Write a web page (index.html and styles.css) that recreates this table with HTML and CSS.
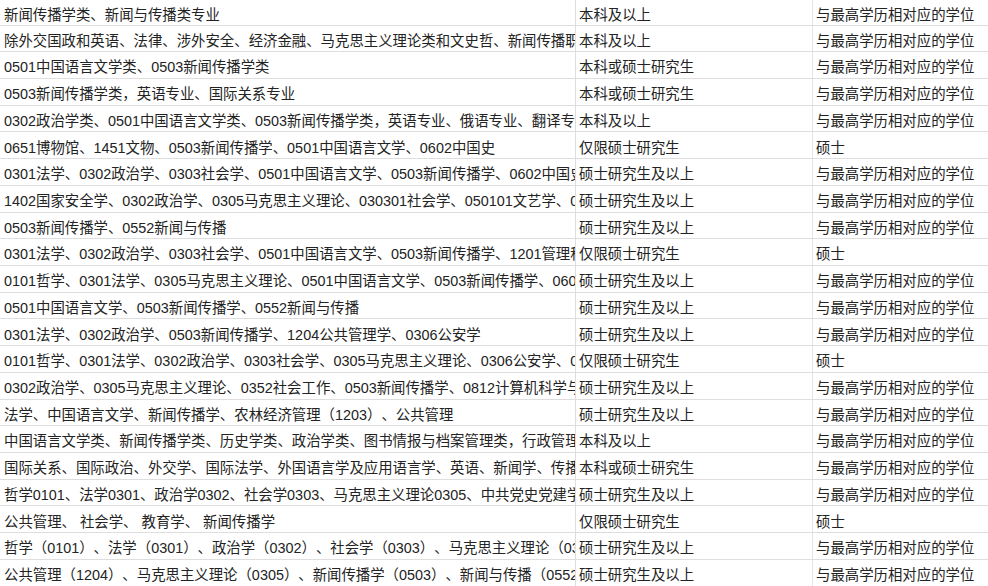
FILE: index.html
```html
<!DOCTYPE html>
<html lang="zh">
<head>
<meta charset="utf-8">
<link rel="stylesheet" href="styles.css">
</head>
<body>
<div class="sheet">
  <div class="row first"><div class="c1">新闻传播学类、新闻与传播类专业</div><div class="c2">本科及以上</div><div class="c3">与最高学历相对应的学位</div></div>
  <div class="row"><div class="c1">除外交国政和英语、法律、涉外安全、经济金融、马克思主义理论类和文史哲、新闻传播职业</div><div class="c2">本科及以上</div><div class="c3">与最高学历相对应的学位</div></div>
  <div class="row"><div class="c1">0501中国语言文学类、0503新闻传播学类</div><div class="c2">本科或硕士研究生</div><div class="c3">与最高学历相对应的学位</div></div>
  <div class="row"><div class="c1">0503新闻传播学类，英语专业、国际关系专业</div><div class="c2">本科或硕士研究生</div><div class="c3">与最高学历相对应的学位</div></div>
  <div class="row"><div class="c1">0302政治学类、0501中国语言文学类、0503新闻传播学类，英语专业、俄语专业、翻译专业</div><div class="c2">本科及以上</div><div class="c3">与最高学历相对应的学位</div></div>
  <div class="row"><div class="c1">0651博物馆、1451文物、0503新闻传播学、0501中国语言文学、0602中国史</div><div class="c2">仅限硕士研究生</div><div class="c3">硕士</div></div>
  <div class="row"><div class="c1">0301法学、0302政治学、0303社会学、0501中国语言文学、0503新闻传播学、0602中国史</div><div class="c2">硕士研究生及以上</div><div class="c3">与最高学历相对应的学位</div></div>
  <div class="row"><div class="c1">1402国家安全学、0302政治学、0305马克思主义理论、030301社会学、050101文艺学、050102</div><div class="c2">硕士研究生及以上</div><div class="c3">与最高学历相对应的学位</div></div>
  <div class="row"><div class="c1">0503新闻传播学、0552新闻与传播</div><div class="c2">硕士研究生及以上</div><div class="c3">与最高学历相对应的学位</div></div>
  <div class="row"><div class="c1">0301法学、0302政治学、0303社会学、0501中国语言文学、0503新闻传播学、1201管理科学</div><div class="c2">仅限硕士研究生</div><div class="c3">硕士</div></div>
  <div class="row"><div class="c1">0101哲学、0301法学、0305马克思主义理论、0501中国语言文学、0503新闻传播学、0602中国史</div><div class="c2">硕士研究生及以上</div><div class="c3">与最高学历相对应的学位</div></div>
  <div class="row"><div class="c1">0501中国语言文学、0503新闻传播学、0552新闻与传播</div><div class="c2">硕士研究生及以上</div><div class="c3">与最高学历相对应的学位</div></div>
  <div class="row"><div class="c1">0301法学、0302政治学、0503新闻传播学、1204公共管理学、0306公安学</div><div class="c2">硕士研究生及以上</div><div class="c3">与最高学历相对应的学位</div></div>
  <div class="row"><div class="c1">0101哲学、0301法学、0302政治学、0303社会学、0305马克思主义理论、0306公安学、0501</div><div class="c2">仅限硕士研究生</div><div class="c3">硕士</div></div>
  <div class="row"><div class="c1">0302政治学、0305马克思主义理论、0352社会工作、0503新闻传播学、0812计算机科学与技术</div><div class="c2">硕士研究生及以上</div><div class="c3">与最高学历相对应的学位</div></div>
  <div class="row"><div class="c1">法学、中国语言文学、新闻传播学、农林经济管理（1203）、公共管理</div><div class="c2">硕士研究生及以上</div><div class="c3">与最高学历相对应的学位</div></div>
  <div class="row"><div class="c1">中国语言文学类、新闻传播学类、历史学类、政治学类、图书情报与档案管理类，行政管理</div><div class="c2">本科及以上</div><div class="c3">与最高学历相对应的学位</div></div>
  <div class="row"><div class="c1">国际关系、国际政治、外交学、国际法学、外国语言学及应用语言学、英语、新闻学、传播学</div><div class="c2">本科或硕士研究生</div><div class="c3">与最高学历相对应的学位</div></div>
  <div class="row"><div class="c1">哲学0101、法学0301、政治学0302、社会学0303、马克思主义理论0305、中共党史党建学</div><div class="c2">硕士研究生及以上</div><div class="c3">与最高学历相对应的学位</div></div>
  <div class="row"><div class="c1">公共管理、 社会学、 教育学、 新闻传播学</div><div class="c2">仅限硕士研究生</div><div class="c3">硕士</div></div>
  <div class="row"><div class="c1">哲学（0101）、法学（0301）、政治学（0302）、社会学（0303）、马克思主义理论（0305）</div><div class="c2">硕士研究生及以上</div><div class="c3">与最高学历相对应的学位</div></div>
  <div class="row"><div class="c1">公共管理（1204）、马克思主义理论（0305）、新闻传播学（0503）、新闻与传播（0552）</div><div class="c2">硕士研究生及以上</div><div class="c3">与最高学历相对应的学位</div></div>
</div>
</body>
</html>
```
FILE: styles.css
```css
html, body {
  margin: 0;
  padding: 0;
  background: #ffffff;
}
body {
  width: 988px;
  height: 586px;
  overflow: hidden;
  font-family: "Liberation Sans", "Noto Sans CJK SC", sans-serif;
  font-size: 14.4px;
  color: #232323;
  text-spacing-trim: space-all;
}
.sheet {
  display: flex;
  flex-direction: column;
}
.row {
  display: grid;
  grid-template-columns: 576px 237px 1fr;
  height: 26.72px;
  box-sizing: border-box;
  border-bottom: 1px solid #dedede;
}
.row.first {
  height: 25.5px;
}
.c1, .c2, .c3 {
  display: flex;
  align-items: center;
  padding-top: 5px;
  white-space: nowrap;
  overflow: hidden;
  box-sizing: border-box;
  line-height: 1;
}
.c1 {
  padding-left: 4px;
  border-right: 1px solid #dedede;
}
.c2 {
  padding-left: 3px;
  border-right: 1px solid #e4e4e4;
}
.c3 {
  padding-left: 3px;
}
```
